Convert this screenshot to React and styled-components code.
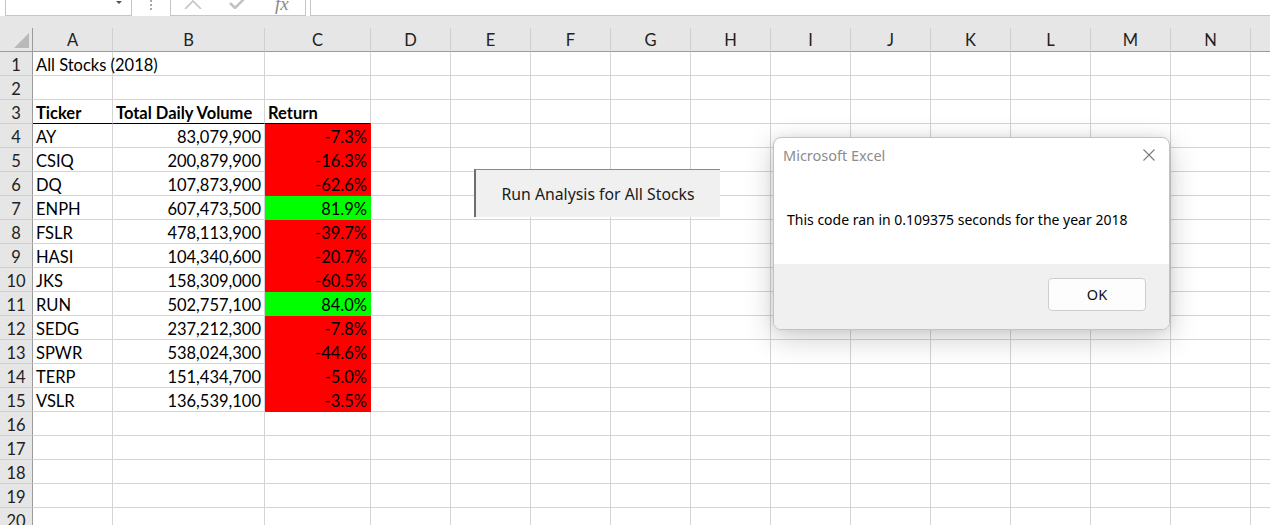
import React from "react";
import styled, { createGlobalStyle } from "styled-components";

const GlobalStyle = createGlobalStyle`
  html, body { margin: 0; padding: 0; background: #ffffff; overflow: hidden; }
  * { box-sizing: border-box; }
`;

const CELL_FONT = `Lato, "Liberation Sans", sans-serif`;
const UI_FONT = `"Noto Sans", "Open Sans", "Liberation Sans", sans-serif`;

const COLS = [
  { key: "A", w: 80 },
  { key: "B", w: 152 },
  { key: "C", w: 106 },
  { key: "D", w: 80 },
  { key: "E", w: 80 },
  { key: "F", w: 80 },
  { key: "G", w: 80 },
  { key: "H", w: 80 },
  { key: "I", w: 80 },
  { key: "J", w: 80 },
  { key: "K", w: 80 },
  { key: "L", w: 80 },
  { key: "M", w: 80 },
  { key: "N", w: 80 },
  { key: "O", w: 80 },
];

const TEMPLATE = `33px ${COLS.map((c) => c.w + "px").join(" ")}`;

const DATA = [
  ["AY", "83,079,900", "-7.3%"],
  ["CSIQ", "200,879,900", "-16.3%"],
  ["DQ", "107,873,900", "-62.6%"],
  ["ENPH", "607,473,500", "81.9%"],
  ["FSLR", "478,113,900", "-39.7%"],
  ["HASI", "104,340,600", "-20.7%"],
  ["JKS", "158,309,000", "-60.5%"],
  ["RUN", "502,757,100", "84.0%"],
  ["SEDG", "237,212,300", "-7.8%"],
  ["SPWR", "538,024,300", "-44.6%"],
  ["TERP", "151,434,700", "-5.0%"],
  ["VSLR", "136,539,100", "-3.5%"],
];

const Page = styled.div`
  position: relative;
  width: 1270px;
  height: 525px;
  overflow: hidden;
  background: #e6e6e6;
`;

const FormulaBar = styled.div`
  display: flex;
  align-items: stretch;
  height: 16px;
  background: #ffffff;
  padding-left: 5px;
`;

const NameBox = styled.div`
  position: relative;
  width: 127px;
  border: 1px solid #c6c6c6;
  border-top: none;
  background: #fff;
`;

const DropArrow = styled.div`
  position: absolute;
  right: 9px;
  top: 1px;
  width: 0;
  height: 0;
  border-left: 3px solid transparent;
  border-right: 3px solid transparent;
  border-top: 3px solid #555;
`;

const Dots = styled.div`
  width: 38px;
  display: flex;
  flex-direction: column;
  align-items: center;
  gap: 2px;
  span {
    width: 2px;
    height: 2px;
    background: #a8a8a8;
  }
`;

const FxBox = styled.div`
  width: 136px;
  border: 1px solid #c6c6c6;
  border-top: none;
  display: flex;
  align-items: flex-start;
  padding-left: 13px;
  overflow: hidden;
`;

const FxIconSlot = styled.div`
  width: ${(p) => p.$w}px;
  height: 15px;
  display: flex;
  align-items: flex-start;
  justify-content: flex-start;
  overflow: hidden;
`;

const FxText = styled.span`
  font-family: "Liberation Serif", serif;
  font-style: italic;
  font-size: 19px;
  line-height: 19px;
  margin-top: -6px;
  color: #8a8a8a;
`;

const FormulaInput = styled.div`
  flex: 1;
  margin-left: 4px;
  border: 1px solid #c6c6c6;
  border-top: none;
  border-right: none;
  background: #fff;
`;

const Grid = styled.div`
  margin-top: 12px;
  display: grid;
  grid-template-columns: ${TEMPLATE};
  grid-auto-rows: 24px;
  background: #ffffff;
`;

const Corner = styled.div`
  position: relative;
  background: #e6e6e6;
  border-right: 1px solid #9b9b9b;
  border-bottom: 1px solid #9b9b9b;
  &::after {
    content: "";
    position: absolute;
    right: 3px;
    bottom: 3px;
    width: 0;
    height: 0;
    border-left: 15px solid transparent;
    border-bottom: 15px solid #b9b9b9;
  }
`;

const ColHeader = styled.div`
  background: #e6e6e6;
  border-right: 1px solid #cfcfcf;
  border-bottom: 1px solid #9b9b9b;
  display: flex;
  align-items: center;
  justify-content: center;
  font-family: ${CELL_FONT};
  font-size: 16.5px;
  color: #222;
  padding-top: 1px;
`;

const RowHeader = styled.div`
  background: #e6e6e6;
  border-right: 1px solid #9b9b9b;
  border-bottom: 1px solid #cfcfcf;
  display: flex;
  align-items: center;
  justify-content: center;
  font-family: ${CELL_FONT};
  font-size: 16.5px;
  color: #222;
  padding-top: 2px;
`;

const FILLS = { red: "#ff0000", green: "#00ff00" };

const Cell = styled.div`
  border-right: 1px solid ${(p) => (p.$fill ? FILLS[p.$fill] : "#d4d4d4")};
  border-bottom: 1px solid
    ${(p) => (p.$underline ? "#000" : p.$fill ? FILLS[p.$fill] : "#d4d4d4")};
  background: ${(p) => (p.$fill ? FILLS[p.$fill] : "#fff")};
  display: flex;
  align-items: center;
  justify-content: ${(p) => (p.$right ? "flex-end" : "flex-start")};
  padding: 2px 3px 0 3px;
  font-family: ${CELL_FONT};
  font-size: 16.5px;
  font-weight: ${(p) => (p.$bold ? 700 : 400)};
  color: #000;
  white-space: nowrap;
  overflow: visible;
`;

const CellText = styled.span`
  position: relative;
  z-index: 1;
`;

const MacroButton = styled.button`
  position: absolute;
  left: 474px;
  top: 169px;
  width: 246px;
  height: 48px;
  background: #f0f0f0;
  border: none;
  border-top: 1px solid #8a8a8a;
  border-left: 2px solid #6e6e6e;
  font-family: ${UI_FONT};
  font-size: 15.8px;
  color: #1a1a1a;
  padding: 0;
  cursor: default;
  z-index: 2;
`;

const Dialog = styled.div`
  position: absolute;
  left: 773px;
  top: 137px;
  width: 397px;
  height: 193px;
  border-radius: 8px;
  border: 1px solid #c3c3c3;
  background: #ffffff;
  box-shadow: 0 8px 30px rgba(0, 0, 0, 0.2), 0 0 10px rgba(0, 0, 0, 0.08);
  display: flex;
  flex-direction: column;
  overflow: hidden;
  z-index: 2;
`;

const DialogTitleBar = styled.div`
  height: 37px;
  display: flex;
  align-items: center;
  justify-content: space-between;
  padding: 0 14px 4px 9px;
  font-family: ${UI_FONT};
  font-size: 14.5px;
  color: #8c8c8c;
`;

const DialogBody = styled.div`
  flex: 1;
  display: flex;
  align-items: center;
  padding: 0 0 0 13px;
  font-family: ${UI_FONT};
  font-size: 14px;
  color: #000;
`;

const DialogFooter = styled.div`
  height: 65px;
  background: #f0f0f0;
  display: flex;
  align-items: center;
  justify-content: flex-end;
  padding: 0 23px 5px 0;
`;

const OkButton = styled.button`
  width: 98px;
  height: 33px;
  background: #fdfdfd;
  border: 1px solid #cdcdcd;
  border-radius: 4px;
  font-family: ${UI_FONT};
  font-size: 14.5px;
  color: #111;
  padding: 0;
  cursor: default;
`;

function CloseIcon() {
  return (
    <svg width="12" height="12" viewBox="0 0 12 12">
      <path d="M0.5 0.5 L11.5 11.5 M11.5 0.5 L0.5 11.5" stroke="#7a7a7a" strokeWidth="1.1" fill="none" />
    </svg>
  );
}

function CancelIcon() {
  return (
    <svg width="18" height="9" viewBox="0 0 18 9">
      <path d="M1 9 L9 1 L17 9" stroke="#c2c2c2" strokeWidth="1.6" fill="none" />
    </svg>
  );
}

function EnterIcon() {
  return (
    <svg width="16" height="9" viewBox="0 0 16 9">
      <path d="M1 3 L6 8 L15 -1" stroke="#c2c2c2" strokeWidth="2.6" fill="none" />
    </svg>
  );
}

function cellsForRow(r) {
  const cells = {};
  if (r === 1) cells.A = { text: "All Stocks (2018)" };
  if (r === 3) {
    cells.A = { text: "Ticker", bold: true, underline: true };
    cells.B = { text: "Total Daily Volume", bold: true, underline: true };
    cells.C = { text: "Return", bold: true, underline: true };
  }
  if (r >= 4 && r <= 15) {
    const [t, v, ret] = DATA[r - 4];
    cells.A = { text: t };
    cells.B = { text: v, right: true };
    cells.C = { text: ret, right: true, fill: ret.startsWith("-") ? "red" : "green" };
  }
  return cells;
}

export default function App() {
  const rows = Array.from({ length: 20 }, (_, i) => i + 1);
  return (
    <>
      <GlobalStyle />
      <Page>
        <FormulaBar>
          <NameBox>
            <DropArrow />
          </NameBox>
          <Dots>
            <span />
            <span />
            <span />
          </Dots>
          <FxBox>
            <FxIconSlot $w={45}>
              <CancelIcon />
            </FxIconSlot>
            <FxIconSlot $w={46}>
              <EnterIcon />
            </FxIconSlot>
            <FxIconSlot $w={25}>
              <FxText>fx</FxText>
            </FxIconSlot>
          </FxBox>
          <FormulaInput />
        </FormulaBar>
        <Grid>
          <Corner />
          {COLS.map((c) => (
            <ColHeader key={c.key}>{c.key}</ColHeader>
          ))}
          {rows.map((r) => {
            const cells = cellsForRow(r);
            return (
              <React.Fragment key={r}>
                <RowHeader>{r}</RowHeader>
                {COLS.map((c) => {
                  const cell = cells[c.key] || {};
                  return (
                    <Cell
                      key={c.key}
                      $bold={cell.bold}
                      $right={cell.right}
                      $fill={cell.fill}
                      $underline={cell.underline}
                    >
                      {cell.text && <CellText>{cell.text}</CellText>}
                    </Cell>
                  );
                })}
              </React.Fragment>
            );
          })}
        </Grid>
        <MacroButton>Run Analysis for All Stocks</MacroButton>
        <Dialog>
          <DialogTitleBar>
            <span>Microsoft Excel</span>
            <CloseIcon />
          </DialogTitleBar>
          <DialogBody>This code ran in 0.109375 seconds for the year 2018</DialogBody>
          <DialogFooter>
            <OkButton>OK</OkButton>
          </DialogFooter>
        </Dialog>
      </Page>
    </>
  );
}
